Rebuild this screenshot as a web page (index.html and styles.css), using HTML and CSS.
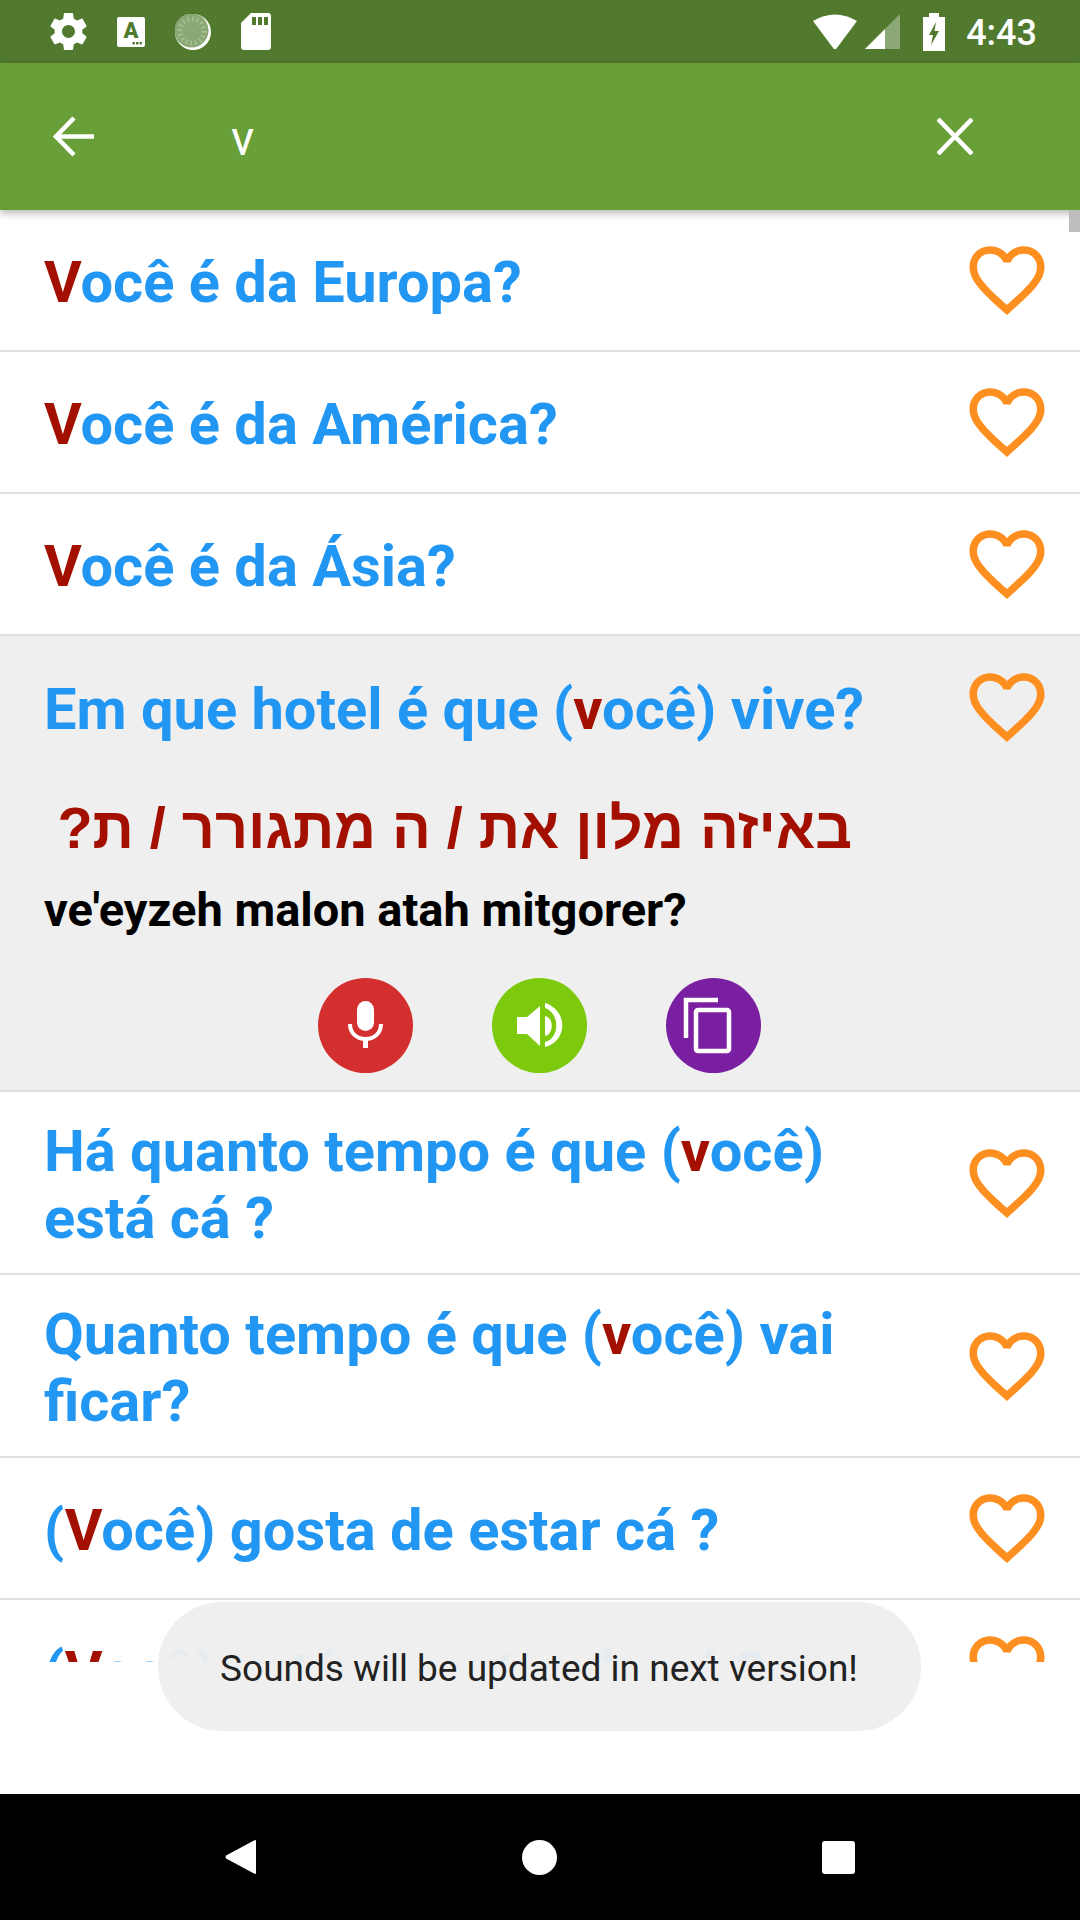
FILE: index.html
```html
<!DOCTYPE html>
<html lang="pt">
<head>
    <meta charset="UTF-8">
    <meta name="viewport" content="width=device-width, initial-scale=1.0">
    <title>Busca</title>
    <link rel="stylesheet" href="styles.css">
</head>
<body>
    <svg class="defs" width="0" height="0">
        <symbol id="heart" viewBox="0 0 24 24">
            <path d="M16.5 3c-1.74 0-3.41.81-4.5 2.09C10.91 3.81 9.24 3 7.5 3 4.42 3 2 5.42 2 8.5c0 3.78 3.4 6.86 8.55 11.54L12 21.35l1.45-1.32C18.6 15.36 22 12.28 22 8.5 22 5.42 19.58 3 16.5 3zm-4.4 15.55l-.1.1-.1-.1C7.14 14.24 4 11.39 4 8.5 4 6.5 5.5 5 7.5 5c1.54 0 3.04.99 3.57 2.36h1.87C13.46 5.99 14.96 5 16.5 5c2 0 3.5 1.5 3.5 3.5 0 2.89-3.14 5.74-7.9 10.05z"/>
        </symbol>
    </svg>

    <div class="status-bar">
        <svg class="st-gear" viewBox="2 2 20 20"><path fill="#fff" d="M19.43 12.98c.04-.32.07-.64.07-.98s-.03-.66-.07-.98l2.11-1.65c.19-.15.24-.42.12-.64l-2-3.46c-.12-.22-.39-.3-.61-.22l-2.49 1c-.52-.4-1.08-.73-1.69-.98l-.38-2.65C14.46 2.18 14.25 2 14 2h-4c-.25 0-.46.18-.49.42l-.38 2.65c-.61.25-1.17.59-1.69.98l-2.49-1c-.23-.09-.49 0-.61.22l-2 3.46c-.13.22-.07.49.12.64l2.11 1.65c-.04.32-.07.65-.07.98s.03.66.07.98l-2.11 1.65c-.19.15-.24.42-.12.64l2 3.46c.12.22.39.3.61.22l2.49-1c.52.4 1.08.73 1.69.98l.38 2.65c.03.24.24.42.49.42h4c.25 0 .46-.18.49-.42l.38-2.65c.61-.25 1.17-.59 1.69-.98l2.49 1c.23.09.49 0 .61-.22l2-3.46c.12-.22.07-.49-.12-.64l-2.11-1.65zM12 15.5c-1.93 0-3.5-1.57-3.5-3.5s1.57-3.5 3.5-3.5 3.5 1.57 3.5 3.5-1.57 3.5-3.5 3.5z"/></svg>
        <svg class="st-app" viewBox="0 0 28 30">
            <rect width="28" height="30" rx="2" fill="#fff"/>
            <text x="14" y="21" class="st-app-letter">A</text>
            <rect x="15.500" y="25" width="2.400" height="2.400" fill="#517a2e"/>
            <rect x="19" y="25" width="2.400" height="2.400" fill="#517a2e"/>
            <rect x="22.500" y="25" width="2.400" height="2.400" fill="#517a2e"/>
        </svg>
        <svg class="st-dial" viewBox="0 0 36 36">
            <circle cx="18" cy="18" r="18" fill="#fff"/>
            <circle cx="16.500" cy="16.500" r="17" fill="#8aa875"/>
            <circle cx="17" cy="17" r="12" fill="none" stroke="#a9c096" stroke-width="5" stroke-dasharray="1.500 3.200"/>
        </svg>
        <svg class="st-sd" viewBox="0 0 30 37">
            <path fill="#fff" d="M10 0H27a3 3 0 0 1 3 3V34a3 3 0 0 1-3 3H3a3 3 0 0 1-3-3V10Z"/>
            <path fill="#517a2e" d="M11 4h4v8h-4zM17 4h4v8h-4zM23 4h4v8h-4z"/>
        </svg>
        <div class="status-right">
            <svg class="st-wifi" viewBox="0 0 44 36"><path fill="#fff" d="M0 7Q22-6 44 7L23.500 34.500q-1.500 1.500-3 0Z"/></svg>
            <svg class="st-signal" viewBox="0 0 35 35">
                <path fill="#fff" fill-opacity=".35" d="M0 35 35 0V35Z"/>
                <path fill="#fff" d="M0 35 20 15V35Z"/>
            </svg>
            <svg class="st-battery" viewBox="0 0 22 38"><path fill="#fff" fill-rule="evenodd" d="M6 0h10v4h6v34H0V4h6ZM13 9 6 22h4l-2 10 8-14h-4.500Z"/></svg>
            <span class="st-time">4:43</span>
        </div>
    </div>

    <div class="toolbar">
        <svg class="tb-back" viewBox="0 0 41 41"><path fill="none" stroke="#fff" stroke-width="4.500" d="M41 20.500H4M21 2 3 20.500 21 39"/></svg>
        <span class="tb-query">v</span>
        <svg class="tb-close" viewBox="0 0 36 37"><path fill="none" stroke="#fff" stroke-width="4.500" d="M1 1 35 36M35 1 1 36"/></svg>
    </div>

    <div class="list">
        <div class="row">
            <div class="row-head">
                <div class="phrase"><b>V</b>ocê é da Europa?</div>
                <svg class="heart"><use href="#heart"/></svg>
            </div>
        </div>
        <div class="row">
            <div class="row-head">
                <div class="phrase"><b>V</b>ocê é da América?</div>
                <svg class="heart"><use href="#heart"/></svg>
            </div>
        </div>
        <div class="row">
            <div class="row-head">
                <div class="phrase"><b>V</b>ocê é da Ásia?</div>
                <svg class="heart"><use href="#heart"/></svg>
            </div>
        </div>
        <div class="row row-open">
            <div class="row-head">
                <div class="phrase">Em que hotel é que (<b>v</b>ocê) vive?</div>
                <svg class="heart"><use href="#heart"/></svg>
            </div>
            <div class="hebrew" dir="rtl">באיזה מלון את / ה מתגורר / ת?</div>
            <div class="translit">ve'eyzeh malon atah mitgorer?</div>
            <div class="actions">
                <div class="action action-mic">
                    <svg viewBox="0 0 95 95">
                        <rect x="39" y="23" width="17" height="30" rx="8.500" fill="#fff"/>
                        <path fill="none" stroke="#fff" stroke-width="4" d="M32 46c0 20 31 20 31 0"/>
                        <rect x="45" y="60" width="5" height="10" fill="#fff"/>
                    </svg>
                </div>
                <div class="action action-sound">
                    <svg viewBox="0 0 95 95">
                        <path fill="#fff" d="M25 39H35L48 28V68L35 56H25Z"/>
                        <path fill="#fff" d="M53 25C76 32 76 63 53 69L53 64C68 60 68 35 53 30Z"/>
                        <path fill="#fff" d="M53 38C62 40 62 56 53 58Z"/>
                    </svg>
                </div>
                <div class="action action-copy">
                    <svg viewBox="0 0 95 95">
                        <path fill="none" stroke="#fff" stroke-width="4.500" d="M52 22H20V60"/>
                        <rect x="30" y="32" width="33" height="41" rx="2" fill="none" stroke="#fff" stroke-width="4.500"/>
                    </svg>
                </div>
            </div>
        </div>
        <div class="row">
            <div class="row-head">
                <div class="phrase">Há quanto tempo é que (<b>v</b>ocê)<br>está cá ?</div>
                <svg class="heart"><use href="#heart"/></svg>
            </div>
        </div>
        <div class="row">
            <div class="row-head">
                <div class="phrase">Quanto tempo é que (<b>v</b>ocê) vai<br>ficar?</div>
                <svg class="heart"><use href="#heart"/></svg>
            </div>
        </div>
        <div class="row">
            <div class="row-head">
                <div class="phrase">(<b>V</b>ocê) gosta de estar cá ?</div>
                <svg class="heart"><use href="#heart"/></svg>
            </div>
        </div>
        <div class="row">
            <div class="row-head">
                <div class="phrase">(<b>V</b>ocê) está a gostar de cá ?</div>
                <svg class="heart"><use href="#heart"/></svg>
            </div>
        </div>
    </div>

    <div class="spacer"></div>

    <div class="nav-bar">
        <svg class="nav-back" viewBox="0 0 31 36"><path fill="#fff" d="M30 1a1 1 0 0 1 1 1V34a1 1 0 0 1-1 1L1 19.500q-1-1.500 0-3Z"/></svg>
        <div class="nav-home"></div>
        <div class="nav-recent"></div>
    </div>

    <!-- toast sobre a lista -->
    <div class="toast">Sounds will be updated in next version!</div>
    <div class="scroll-thumb"></div>
</body>
</html>
```

FILE: styles.css
```css
* {
    box-sizing: border-box;
}

html, body {
    margin: 0;
    padding: 0;
}

body {
    position: relative;
    width: 1080px;
    height: 1920px;
    overflow: hidden;
    display: flex;
    flex-direction: column;
    background: #fff;
    font-family: Roboto, "Liberation Sans", sans-serif;
}

.defs {
    position: absolute;
}

/* barra de status */
.status-bar {
    flex: none;
    height: 63px;
    display: flex;
    align-items: center;
    gap: 30px;
    padding: 0 43px 0 50px;
    background: #517a2e;
}

.status-bar svg {
    flex: none;
    display: block;
}

.st-gear {
    width: 37px;
    height: 37px;
}

.st-app {
    width: 28px;
    height: 30px;
}

.st-app-letter {
    font-family: Roboto, sans-serif;
    font-size: 22px;
    font-weight: 900;
    fill: #517a2e;
    text-anchor: middle;
}

.st-dial {
    width: 36px;
    height: 36px;
}

.st-sd {
    width: 30px;
    height: 37px;
}

.status-right {
    margin-left: auto;
    display: flex;
    align-items: center;
}

.st-wifi {
    width: 44px;
    height: 36px;
    margin-right: 8px;
}

.st-signal {
    width: 35px;
    height: 35px;
    margin-right: 23px;
}

.st-battery {
    width: 22px;
    height: 38px;
    margin-right: 21px;
}

.st-time {
    color: #fff;
    font-size: 36px;
    font-weight: 500;
    line-height: 40px;
    margin-top: 2px;
}

/* toolbar */
.toolbar {
    position: relative;
    z-index: 2;
    flex: none;
    height: 147px;
    display: flex;
    align-items: center;
    padding: 0 107px 0 53px;
    background: #689f38;
    box-shadow: 0 3px 8px rgba(0, 0, 0, 0.3);
}

.tb-back {
    width: 41px;
    height: 41px;
    flex: none;
}

.tb-query {
    margin-left: 137px;
    color: #fff;
    font-size: 48px;
    line-height: 56px;
    margin-top: 4px;
}

.tb-close {
    width: 36px;
    height: 37px;
    flex: none;
    margin-left: auto;
}

/* lista */
.list {
    flex: none;
    height: 1452px;
    overflow: hidden;
}

.row {
    border-bottom: 2px solid #e0e0e0;
}

.row-head {
    min-height: 140px;
    display: flex;
    align-items: center;
    padding: 0 28px 0 44px;
}

.row-open {
    height: 456px;
    background: #efefef;
}

.row-open .row-head {
    min-height: 142px;
}

.phrase {
    flex: 1;
    padding: 26px 0 21px;
    color: #2196f3;
    font-size: 57.8px;
    font-weight: 700;
    line-height: 67px;
}

.phrase b {
    color: #a31000;
    font-weight: 700;
}

.heart {
    flex: none;
    width: 90px;
    height: 90px;
    fill: #fd8f20;
}

.hebrew {
    margin-top: 18px;
    padding-right: 228px;
    color: #a31000;
    font-family: "Liberation Sans", sans-serif;
    font-size: 57.5px;
    font-weight: 700;
    line-height: 64px;
}

.translit {
    margin-top: 25px;
    padding-left: 44px;
    color: #000;
    font-size: 47px;
    font-weight: 700;
    line-height: 50px;
}

.actions {
    display: flex;
    justify-content: center;
    gap: 79px;
    margin-top: 43px;
    padding-right: 1px;
}

.action {
    width: 95px;
    height: 95px;
    border-radius: 50%;
}

.action svg {
    display: block;
    width: 95px;
    height: 95px;
}

.action-mic {
    background: #d32f2f;
}

.action-sound {
    background: #7cc90e;
}

.action-copy {
    background: #7b1fa2;
}

.spacer {
    flex: 1;
}

/* barra de navegacao */
.nav-bar {
    flex: none;
    height: 126px;
    display: flex;
    align-items: center;
    padding: 0 225px;
    justify-content: space-between;
    background: #000;
}

.nav-back {
    width: 31px;
    height: 36px;
}

.nav-home {
    width: 35px;
    height: 35px;
    border-radius: 50%;
    background: #fff;
}

.nav-recent {
    width: 33px;
    height: 33px;
    border-radius: 3px;
    background: #fff;
}

.toast {
    position: absolute;
    left: 158px;
    top: 1602px;
    width: 763px;
    height: 129px;
    display: flex;
    align-items: center;
    justify-content: center;
    border-radius: 64px;
    background: rgba(238, 238, 238, 0.96);
    color: #222;
    font-size: 37px;
    padding-top: 3px;
    padding-right: 1px;
}

.scroll-thumb {
    position: absolute;
    z-index: 3;
    right: 0;
    top: 210px;
    width: 11px;
    height: 22px;
    background: #bdbdbd;
}
```
